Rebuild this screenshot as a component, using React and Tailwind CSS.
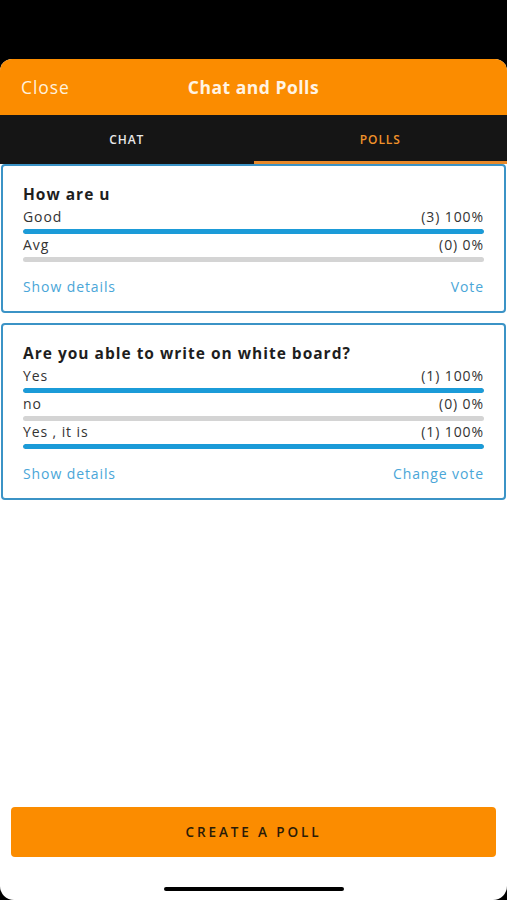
export default function App() {
  const font = { fontFamily: '"Open Sans", "Liberation Sans", sans-serif' };
  const Bar = ({ label, stat, pct }) => (
    <div className="flex flex-col">
      <div className="flex justify-between text-[14px] leading-[18px] text-[#333] tracking-[0.9px]">
        <span>{label}</span>
        <span>{stat}</span>
      </div>
      <div className="mt-[3px] h-[5px] rounded-full bg-[#d4d4d4] overflow-hidden">
        <div className="h-full rounded-full bg-[#1b9bd8]" style={{ width: pct + '%' }} />
      </div>
    </div>
  );
  const Card = ({ title, children, action }) => (
    <div className="border-2 border-[#3b93c6] rounded-[4px] px-[20px] pt-[17px] pb-[14px]">
      <div className="text-[15.5px] font-bold text-[#1e1e1e] leading-[22px] tracking-[1px]">{title}</div>
      <div className="flex flex-col gap-[2px] mt-[3px]">{children}</div>
      <div className="flex justify-between mt-[15px] text-[14px] text-[#4aa6d8] tracking-[0.9px] leading-[20px]">
        <span>Show details</span>
        <span>{action}</span>
      </div>
    </div>
  );
  return (
    <div className="w-[507px] h-[900px] bg-black flex flex-col" style={font}>
      <div className="mt-[59px] flex-1 bg-white rounded-t-[12px] rounded-b-[14px] overflow-hidden flex flex-col">
        <div className="h-[56px] bg-[#fb8c00] flex items-center relative">
          <span className="ml-[21px] text-[17.5px] text-[#fff1dc] tracking-[0.9px]">Close</span>
          <span className="absolute left-0 right-0 text-center text-[17.5px] font-bold text-[#fff4e4] tracking-[0.5px] pointer-events-none">Chat and Polls</span>
        </div>
        <div className="h-[49px] bg-[#151515] flex">
          <div className="flex-1 flex items-center justify-center text-[12px] font-semibold text-[#e8e8e8] tracking-[0.9px]">CHAT</div>
          <div className="flex-1 flex items-center justify-center text-[12px] font-semibold text-[#f0922a] tracking-[0.9px] border-b-[3px] border-[#e8892a] pt-[3px]">POLLS</div>
        </div>
        <div className="flex flex-col gap-[10px] px-[1px] pt-[0px]">
          <Card title="How are u" action="Vote">
            <Bar label="Good" stat="(3) 100%" pct={100} />
            <Bar label="Avg" stat="(0) 0%" pct={0} />
          </Card>
          <Card title="Are you able to write on white board?" action="Change vote">
            <Bar label="Yes" stat="(1) 100%" pct={100} />
            <Bar label="no" stat="(0) 0%" pct={0} />
            <Bar label="Yes , it is" stat="(1) 100%" pct={100} />
          </Card>
        </div>
        <div className="flex-1" />
        <div className="px-[11px]">
          <div className="h-[50px] bg-[#fb8c00] rounded-[4px] flex items-center justify-center text-[13.5px] font-semibold text-[#2a1b08] tracking-[2.9px]">CREATE A POLL</div>
        </div>
        <div className="h-[43px] flex items-end justify-center pb-[9px]">
          <div className="w-[180px] h-[4px] rounded-full bg-black" />
        </div>
      </div>
    </div>
  );
}
